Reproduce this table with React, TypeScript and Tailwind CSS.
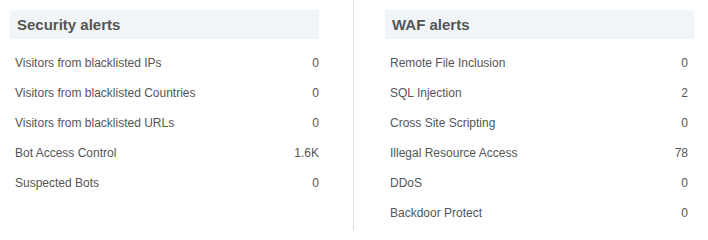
import React from 'react'

type Row = { label: string; value: string }

const security: Row[] = [
  { label: 'Visitors from blacklisted IPs', value: '0' },
  { label: 'Visitors from blacklisted Countries', value: '0' },
  { label: 'Visitors from blacklisted URLs', value: '0' },
  { label: 'Bot Access Control', value: '1.6K' },
  { label: 'Suspected Bots', value: '0' },
]

const waf: Row[] = [
  { label: 'Remote File Inclusion', value: '0' },
  { label: 'SQL Injection', value: '2' },
  { label: 'Cross Site Scripting', value: '0' },
  { label: 'Illegal Resource Access', value: '78' },
  { label: 'DDoS', value: '0' },
  { label: 'Backdoor Protect', value: '0' },
]

const Panel = ({ title, rows, valuePad }: { title: string; rows: Row[]; valuePad: string }) => (
  <div className="w-[309px] flex flex-col">
    <div className="h-[29px] bg-[#f1f5f8] flex items-center pl-[7px] pt-[1px] text-[15px] font-bold text-[#555]">
      {title}
    </div>
    <div className="mt-[9px] flex flex-col">
      {rows.map((r) => (
        <div key={r.label} className={`h-[30px] flex items-center justify-between pl-[5px] ${valuePad} text-[12px] text-[#555]`}>
          <span>{r.label}</span>
          <span>{r.value}</span>
        </div>
      ))}
    </div>
  </div>
)

export default function App() {
  return (
    <div className="w-[708px] h-[240px] bg-white flex font-['Liberation_Sans',sans-serif]">
      <div className="w-[354px] h-[230px] pl-[10px] pt-[10px] border-r border-[#d5dde5]">
        <Panel title="Security alerts" rows={security} valuePad="pr-0" />
      </div>
      <div className="pl-[31px] pt-[10px]">
        <Panel title="WAF alerts" rows={waf} valuePad="pr-[6px]" />
      </div>
    </div>
  )
}
